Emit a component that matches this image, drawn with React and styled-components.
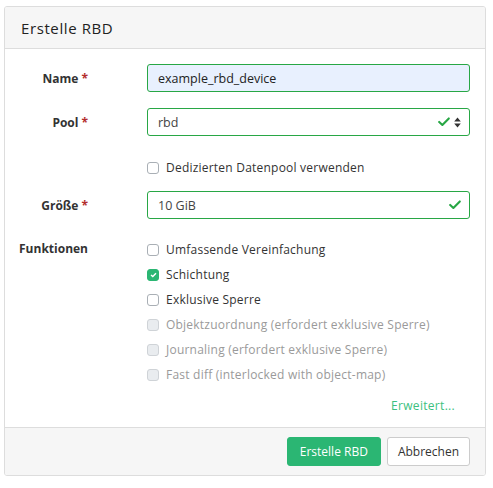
import React from 'react';
import styled, { createGlobalStyle } from 'styled-components';

const Global = createGlobalStyle`
  body {
    margin: 0;
    background: #fff;
    font-family: "Open Sans", "Liberation Sans", sans-serif;
    color: #333;
  }
`;

const Card = styled.div`
  margin: 6px 7px 0 4px;
  width: 480px;
  border: 1px solid #ddd;
  border-radius: 3px;
  overflow: hidden;
`;

const Header = styled.div`
  height: 41px;
  display: flex;
  align-items: center;
  padding: 0 16px;
  background: #f6f6f6;
  border-bottom: 1px solid #ddd;
  font-size: 15px;
  letter-spacing: 0.6px;
  color: #222;
`;

const Body = styled.div`
  padding: 15px 15px 13px 15px;
  display: grid;
  grid-template-columns: 68px 1fr;
  column-gap: 59px;
`;

const Label = styled.label`
  font-size: 12px;
  font-weight: 700;
  text-align: right;
  white-space: nowrap;
  align-self: ${p => (p.top ? 'start' : 'center')};
  padding-top: ${p => (p.top ? '3px' : '0')};
  margin-left: -20px;
`;

const Star = styled.span`
  color: #b32d2d;
  margin-left: 3px;
`;

const Field = styled.div`
  position: relative;
  height: 28px;
  border: 1px solid #28a745;
  border-radius: 3px;
  background: ${p => (p.filled ? '#e8f0fe' : '#fff')};
  display: flex;
  align-items: center;
  padding: 0 8px 0 10px;
  box-sizing: border-box;
  font-size: 12.5px;
  color: ${p => (p.filled ? '#222' : '#444')};
`;

const Value = styled.span`
  flex: 1;
`;

const Icons = styled.span`
  display: flex;
  align-items: center;
  gap: 4px;
`;

const Spacer = styled.div`
  height: ${p => p.h}px;
  grid-column: 1 / -1;
`;

const Checks = styled.div`
  display: flex;
  flex-direction: column;
`;

const CheckRow = styled.div`
  height: 25px;
  display: flex;
  align-items: center;
  gap: 7px;
  font-size: 12px;
  letter-spacing: 0.22px;
  color: ${p => (p.disabled ? '#9a9a9a' : '#333')};
`;

const Box = styled.span`
  width: 12px;
  height: 12px;
  box-sizing: border-box;
  border-radius: 3px;
  border: 1px solid ${p => (p.checked ? '#2bb673' : p.disabled ? '#cfd3d7' : '#a9afb5')};
  background: ${p => (p.checked ? '#2bb673' : p.disabled ? '#e9ecef' : '#fff')};
  display: flex;
  align-items: center;
  justify-content: center;
`;

const More = styled.div`
  grid-column: 1 / -1;
  text-align: right;
  padding-right: 15px;
  margin-top: 10px;
  font-size: 12px;
  letter-spacing: 0.3px;
  color: #3cbf80;
`;

const Footer = styled.div`
  height: 47px;
  background: #f6f6f6;
  border-top: 1px solid #ddd;
  display: flex;
  justify-content: flex-end;
  align-items: center;
  gap: 6px;
  padding-right: 15px;
`;

const Button = styled.button`
  height: 29px;
  padding: 0 ${p => (p.primary ? '12px' : '10px')};
  border-radius: 3px;
  font-family: inherit;
  font-size: 12px;
  border: 1px solid ${p => (p.primary ? '#2bb673' : '#ccc')};
  background: ${p => (p.primary ? '#2bb673' : '#fff')};
  color: ${p => (p.primary ? '#fff' : '#333')};
`;

const Tick = ({ size = 12 }) => (
  <svg width={size} height={size * 0.8} viewBox="0 0 12 10">
    <path d="M1 5.2 L4.3 8.3 L11 1.5" fill="none" stroke="#28a745" strokeWidth="2.2" strokeLinecap="round" strokeLinejoin="round" />
  </svg>
);

const Sort = () => (
  <svg width="7" height="11" viewBox="0 0 7 11">
    <path d="M3.5 0.5 L6.8 4.5 H0.2 Z M3.5 10.5 L6.8 6.5 H0.2 Z" fill="#333" />
  </svg>
);

const Check = ({ label, checked, disabled }) => (
  <CheckRow disabled={disabled}>
    <Box checked={checked} disabled={disabled}>
      {checked && (
        <svg width="7" height="6" viewBox="0 0 7 6">
          <path d="M1 3 L2.8 4.6 L6 1.2" fill="none" stroke="#fff" strokeWidth="1.4" />
        </svg>
      )}
    </Box>
    {label}
  </CheckRow>
);

const features = [
  { label: 'Umfassende Vereinfachung' },
  { label: 'Schichtung', checked: true },
  { label: 'Exklusive Sperre' },
  { label: 'Objektzuordnung (erfordert exklusive Sperre)', disabled: true },
  { label: 'Journaling (erfordert exklusive Sperre)', disabled: true },
  { label: 'Fast diff (interlocked with object-map)', disabled: true },
];

export default function App() {
  return (
    <>
      <Global />
      <Card>
        <Header>Erstelle RBD</Header>
        <Body>
          <Label>Name<Star>*</Star></Label>
          <Field filled>
            <Value>example_rbd_device</Value>
          </Field>
          <Spacer h={16} />
          <Label>Pool<Star>*</Star></Label>
          <Field>
            <Value>rbd</Value>
            <Icons>
              <Tick />
              <Sort />
            </Icons>
          </Field>
          <Spacer h={19} />
          <span />
          <Check label="Dedizierten Datenpool verwenden" />
          <Spacer h={11} />
          <Label>Größe<Star>*</Star></Label>
          <Field>
            <Value>10 GiB</Value>
            <Icons>
              <Tick />
            </Icons>
          </Field>
          <Spacer h={18} />
          <Label top>Funktionen</Label>
          <Checks>
            {features.map(f => (
              <Check key={f.label} {...f} />
            ))}
          </Checks>
          <More>Erweitert...</More>
        </Body>
        <Footer>
          <Button primary>Erstelle RBD</Button>
          <Button>Abbrechen</Button>
        </Footer>
      </Card>
    </>
  );
}
